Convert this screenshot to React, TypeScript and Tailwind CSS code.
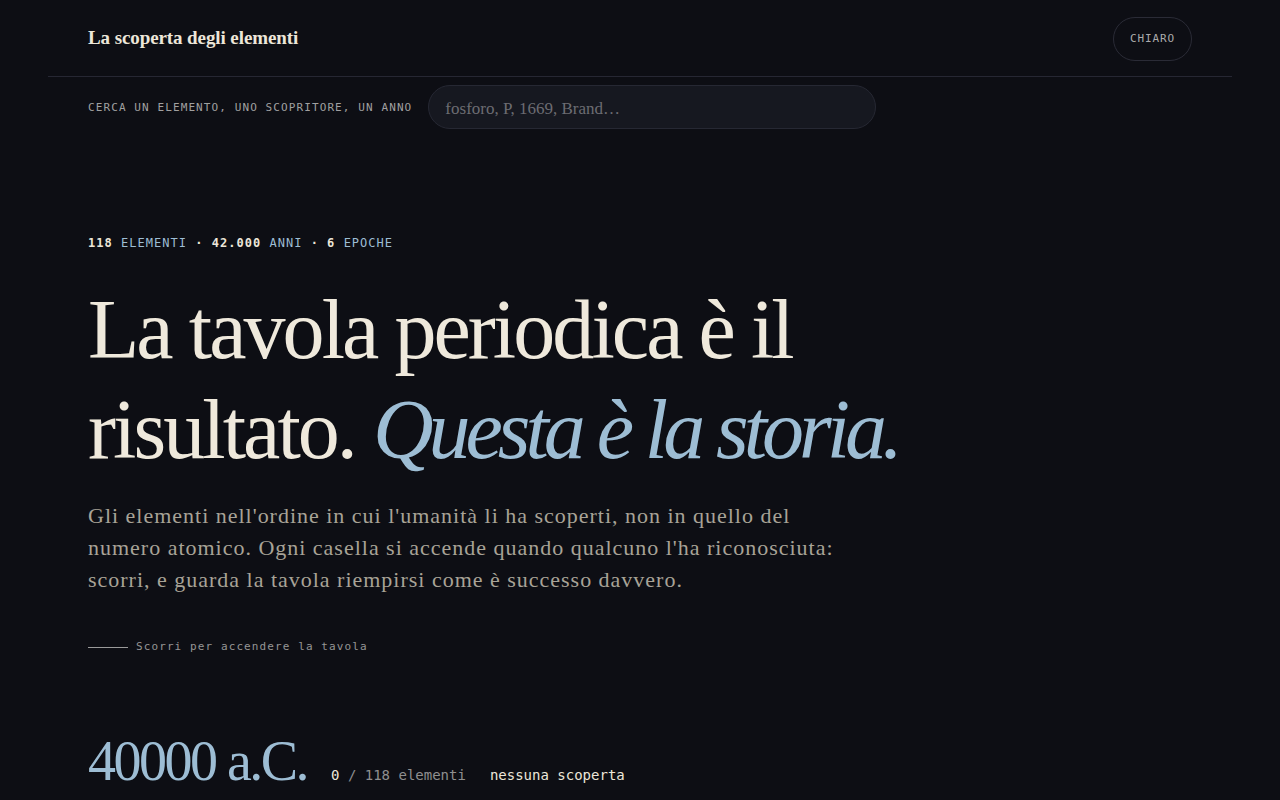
import React from 'react';

const serif = { fontFamily: '"Liberation Serif", "DejaVu Serif", serif' };
const mono = { fontFamily: '"DejaVu Sans Mono", "Liberation Mono", monospace' };

export default function App() {
  return (
    <div className="min-h-screen bg-[#0d0e14] text-[#ece6d9]">
      {/* Header */}
      <header className="mx-12 flex h-[77px] items-center justify-between border-b border-[#262733] px-10">
        <span className="text-[19px] font-bold tracking-[-0.005em] text-[#ece6d9]" style={serif}>
          La scoperta degli elementi
        </span>
        <button
          className="mt-[2px] h-11 rounded-full border border-[#2a2b36] px-4 text-[11px] tracking-[0.08em] text-[#ababab]"
          style={mono}
        >
          CHIARO
        </button>
      </header>

      {/* Search */}
      <div className="mt-2 flex items-center gap-4 px-[88px]">
        <label className="pt-[3px] text-[11px] tracking-[0.1em] text-[#a0a0a0]" style={mono}>
          CERCA UN ELEMENTO, UNO SCOPRITORE, UN ANNO
        </label>
        <input
          placeholder="fosforo, P, 1669, Brand…"
          className="h-11 w-[448px] rounded-full border border-[#262833] bg-[#161820] px-4 pt-[3px] text-[17px] text-[#ece6d9] outline-none placeholder:text-[#6c6c72]"
          style={serif}
        />
      </div>

      {/* Hero */}
      <section className="px-[88px] pt-[105px]">
        <p className="text-[12px] font-bold tracking-[0.085em] text-[#ece6d9]" style={mono}>
          118 <span className="font-normal text-[#9dbdd4]">ELEMENTI</span> · 42.000{' '}
          <span className="font-normal text-[#9dbdd4]">ANNI</span> · 6{' '}
          <span className="font-normal text-[#9dbdd4]">EPOCHE</span>
        </p>

        <h1
          className="mt-[28px] text-[84px] leading-[100px] tracking-[-0.035em] text-[#efe9dc]"
          style={serif}
        >
          La tavola periodica è il
          <br />
          risultato. <em className="tracking-[-0.06em] text-[#9dbdd4]">Questa è la storia.</em>
        </h1>

        <p
          className="mt-[20px] max-w-[752px] text-[22px] leading-[32px] tracking-[0.045em] text-[#a8a397]"
          style={serif}
        >
          Gli elementi nell'ordine in cui l'umanità li ha scoperti, non in quello del numero atomico. Ogni
          casella si accende quando qualcuno l'ha riconosciuta: scorri, e guarda la tavola riempirsi come è
          successo davvero.
        </p>

        <div className="mt-[43px] flex items-center gap-2">
          <span className="h-px w-10 bg-[#9a9a9a]" />
          <span className="text-[11px] tracking-[0.1em] text-[#959595]" style={mono}>
            Scorri per accendere la tavola
          </span>
        </div>
      </section>

      {/* Timeline status */}
      <section className="flex items-baseline gap-6 px-[88px] pt-[77px] pb-20">
        <span className="text-[56px] leading-none tracking-[-0.045em] text-[#9dbdd4]" style={serif}>
          40000 a.C.
        </span>
        <span className="text-[14px] text-[#8f8f8f]" style={mono}>
          <span className="text-[#ece6d9]">0</span> / 118 elementi
        </span>
        <span className="text-[14px] text-[#ece6d9]" style={mono}>
          nessuna scoperta
        </span>
      </section>
    </div>
  );
}
